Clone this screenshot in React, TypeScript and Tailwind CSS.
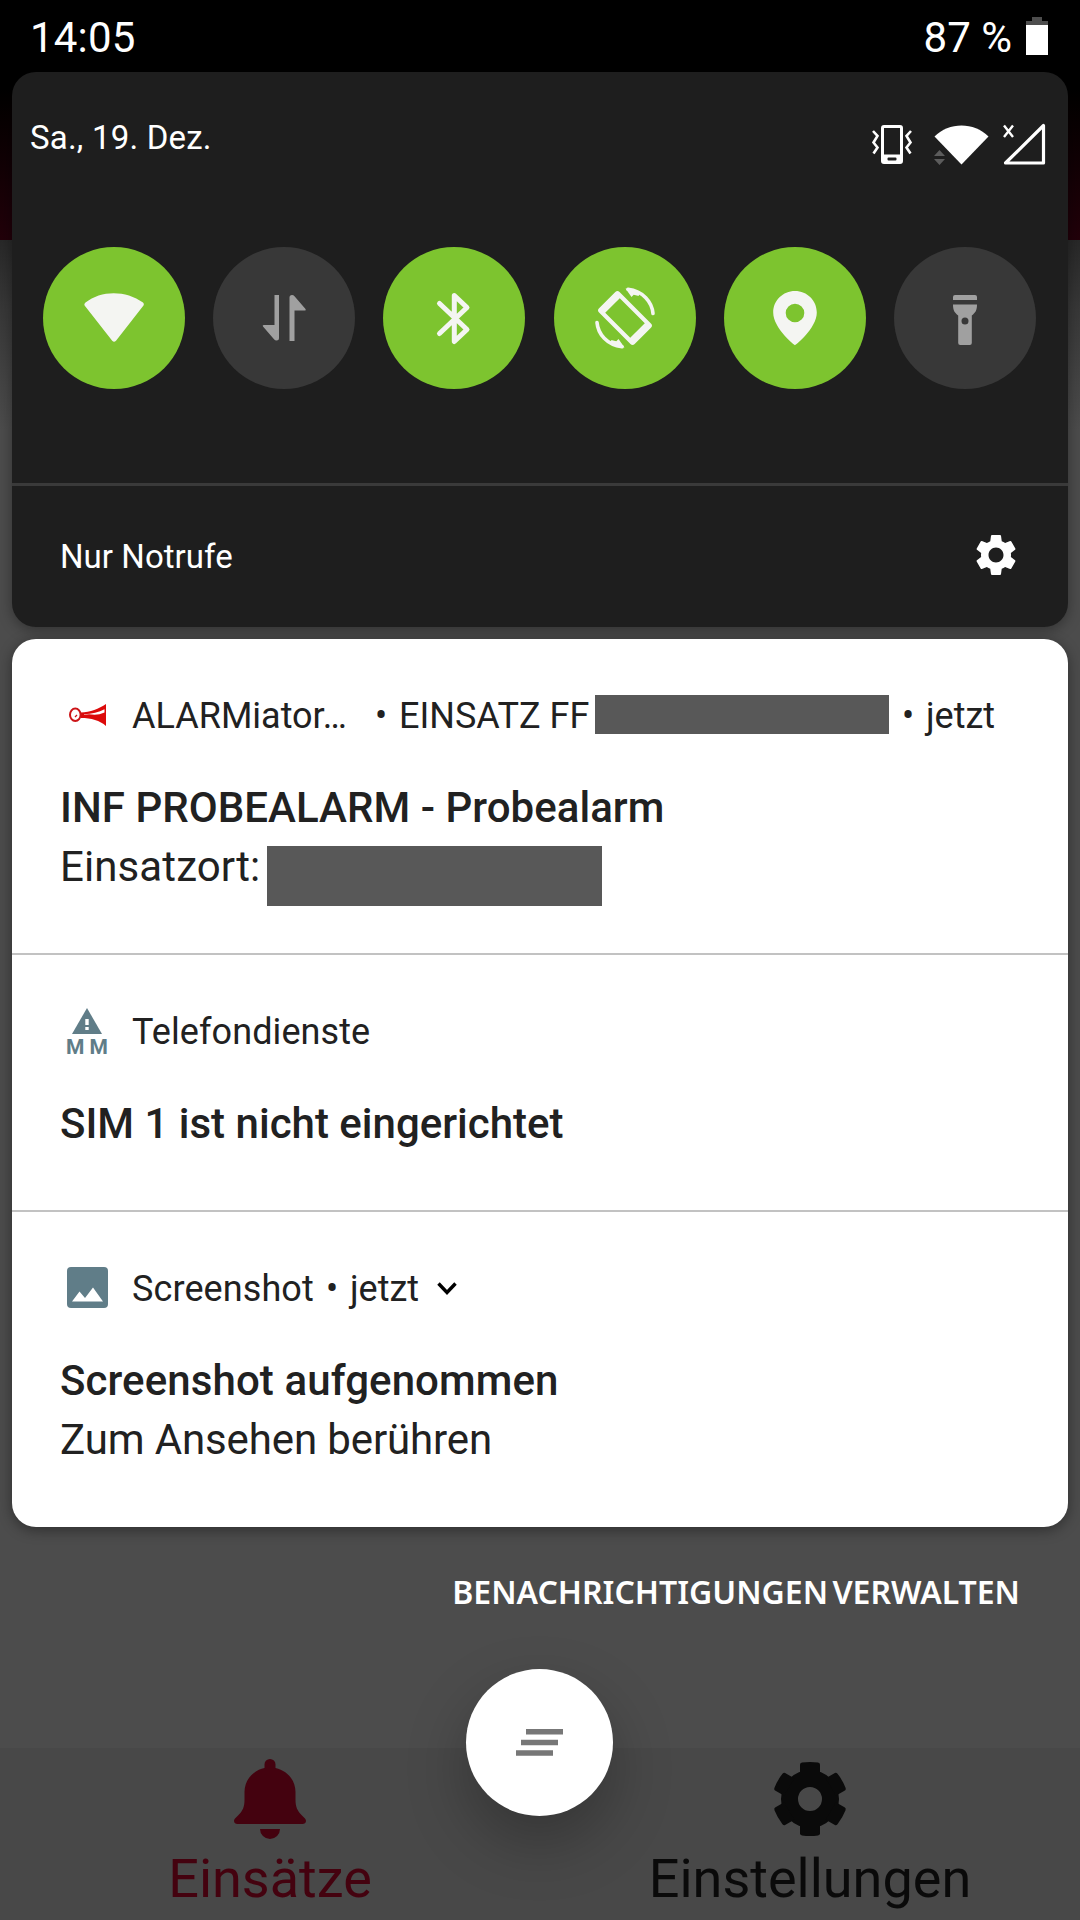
import React from "react";
import { MdSettings } from "react-icons/md";

function StatusBar() {
  return (
    <div className="flex h-[72px] shrink-0 items-start justify-between pl-[30px] pr-8 text-[42px] leading-[48px] text-white">
      <span className="mt-[14px] w-[110px] whitespace-nowrap tracking-[0.2px]">14:05</span>
      <div className="flex items-start">
        <span className="mt-[14px] whitespace-nowrap">87 %</span>
        <svg className="ml-[14px] mt-[17px]" width="22" height="38" viewBox="0 0 22 38">
          <path d="M6 0h10v4h6v5H0V4h6z" fill="#4d4d4d" />
          <path d="M0 8h22v30H0z" fill="#fff" />
        </svg>
      </div>
    </div>
  );
}

function PanelIcons() {
  return (
    <svg width="176" height="44" viewBox="871 123 176 44" fill="none">
      <path fillRule="evenodd" fill="#fff" d="M884 125h16a3 3 0 0 1 3 3v33a3 3 0 0 1-3 3h-16a3 3 0 0 1-3-3v-33a3 3 0 0 1 3-3zm0 3v26.500h16V128zm4.500 29.500a1 1 0 0 0-1 1v1a1 1 0 0 0 1 1h7a1 1 0 0 0 1-1v-1a1 1 0 0 0-1-1z" />
      <path d="M873 131l4.500 5-4 6.500 4 5-4 6M911 131l-4.500 5 4 6.500-4 5 4 6" stroke="#fff" strokeWidth="2.600" />
      <path d="M934.500 136.500C949 121.800 974 121.800 988.500 136.500L961.500 164.500z" fill="#fff" />
      <path d="M934 156l5.500-6 5.500 6zM934 159l5.500 6 5.500-6z" fill="#5c5c5c" />
      <path d="M1004 125.500l9 11.500M1013 125.500l-9 11.500" stroke="#fff" strokeWidth="2.400" />
      <path d="M1005.500 163L1043.500 125.500V163z" stroke="#fff" strokeWidth="3.200" strokeLinejoin="round" />
    </svg>
  );
}

const tiles: { name: string; on: boolean; icon: React.ReactNode }[] = [
  {
    name: "wifi",
    on: true,
    icon: <path transform="translate(0 10)" d="M42.500 45.500C58 33 83 33 100 45.500Q101.600 47 100.500 48.500L73 83.800Q71 85.700 69.200 83.800L41.600 48.500Q40.600 47 42.500 45.500Z" />,
  },
  {
    name: "mobile-data",
    on: false,
    icon: <path d="M61.500 48h4.500v43q0 2.500-2.500 2.500-1.500 0-2.500-1.200L50 79.500q-1-1.500 .8-1.500h10.700zM76.500 94v-43.500q0-2.500 2.500-2.500 1.500 0 2.500 1.200L92.500 62q1 1.500-.8 1.500H81.500V94z" />,
  },
  {
    name: "bluetooth",
    on: true,
    icon: <path d="M56.500 56.500L84 82.500 71.300 94.500V48.500L84 60.500 56.500 86.500" fill="none" stroke="#f4f5f2" strokeWidth="5" strokeLinecap="round" strokeLinejoin="round" />,
  },
  {
    name: "rotate",
    on: true,
    icon: (
      <g transform="translate(71 71)">
        <g transform="rotate(-45)">
          <path fillRule="evenodd" d="M-11.500-25.200h23a3 3 0 0 1 3 3v44.400a3 3 0 0 1-3 3h-23a3 3 0 0 1-3-3v-44.400a3 3 0 0 1 3-3zM-10.300-17.700v35.400h20.600v-35.400z" />
        </g>
        <path d="M3-28.700C18-27 27-16 28-4.500" fill="none" stroke="#f4f5f2" strokeWidth="3.600" strokeLinecap="round" />
        <path d="M.5-29.500l6 8.500 2.200-2.200 5 1.200 1-4.500z" />
        <path d="M-3 28.700C-18 27-27 16-28 4.500" fill="none" stroke="#f4f5f2" strokeWidth="3.600" strokeLinecap="round" />
        <path d="M-.5 29.500l-6-8.500-2.200 2.200-5-1.200-1 4.500z" />
      </g>
    ),
  },
  {
    name: "location",
    on: true,
    icon: <path fillRule="evenodd" d="M71 44C58.800 44 49.200 53.600 49.200 65.500 49.200 81.500 71 98.300 71 98.300S92.800 81.500 92.800 65.500C92.800 53.600 83.200 44 71 44zm0 12.700a9.300 9.300 0 1 1 0 18.600 9.300 9.300 0 0 1 0-18.600z" />,
  },
  {
    name: "torch",
    on: false,
    icon: <path fillRule="evenodd" d="M61 48h20q2 0 2 2v3H59v-3q0-2 2-2zM59 57.500h24c0 6-1.500 8-5.200 11v27.500q0 2-2 2H66.200q-2 0-2-2V68.500c-3.700-3-5.200-5-5.200-11zM71 70.500a3.500 3.500 0 1 0 0 7 3.500 3.500 0 0 0 0-7z" />,
  },
];

function QuickSettings() {
  return (
    <section className="mx-3 flex h-[555px] shrink-0 flex-col rounded-[24px] bg-[#1e1e1e] text-white shadow-[0_3px_14px_rgba(0,0,0,0.35)]">
      <div className="flex h-[175px] items-start justify-between pl-[18px] pr-[21px]">
        <span className="mt-[46px] whitespace-nowrap text-[33px] leading-[40px] tracking-[0.2px]">Sa., 19. Dez.</span>
        <div className="mt-[51px]">
          <PanelIcons />
        </div>
      </div>
      <div className="flex gap-[28.2px] px-[31px]">
        {tiles.map((t) => (
          <div key={t.name} className={t.on ? "size-[142px] shrink-0 rounded-full bg-[#7dc42f] text-[#f4f5f2]" : "size-[142px] shrink-0 rounded-full bg-[#383838] text-[#a0a0a0]"}>
            <svg width="142" height="142" viewBox="0 0 142 142" fill="currentColor">
              {t.icon}
            </svg>
          </div>
        ))}
      </div>
      <div className="mt-[94px] h-[3px] bg-[#3a3a3a]" />
      <div className="flex flex-1 items-center justify-between pl-12 pr-[47px]">
        <span className="whitespace-nowrap text-[33px] leading-[40px] tracking-[0.05px]">Nur Notrufe</span>
        <MdSettings className="mb-[3px] size-[50px]" />
      </div>
    </section>
  );
}

function HornIcon() {
  return (
    <svg width="40" height="26" viewBox="68 702 40 26">
      <path d="M81 712.500c9-.5 18-3.500 25-8.500v22c-6-5.500-15-8-25-8z" fill="#dc0a0a" />
      <path d="M84 714.200q12-.7 20.500-5v3.300q-5 2.300-10 2.300-5-.8-10.500-.1z" fill="#fff" />
      <ellipse cx="75.300" cy="714.700" rx="5.300" ry="6.200" fill="#fff" stroke="#cc1417" strokeWidth="2" />
      <path d="M75 717l2-2" stroke="#cc1417" strokeWidth="1.200" />
    </svg>
  );
}

function SimWarningIcon() {
  return (
    <div className="flex w-[42px] flex-col items-center text-[#607d88]">
      <svg width="30" height="26" viewBox="0 0 30 26">
        <path d="M15 0l15 26H0z" fill="currentColor" />
        <path d="M13.300 11h3.400v6h-3.400zM13.300 19h3.400v3h-3.400z" fill="#fff" />
      </svg>
      <span className="mt-[3px] whitespace-nowrap text-[21px] font-bold leading-[20px]">M M</span>
    </div>
  );
}

function PictureIcon() {
  return (
    <svg width="41" height="41" viewBox="0 0 41 41">
      <rect width="41" height="41" rx="4" fill="#607d88" />
      <path d="M5 34.500l7.500-10 5.500 6.500L26 20.500l10 14z" fill="#fff" />
    </svg>
  );
}

function Header({ icon, children }: { icon: React.ReactNode; children: React.ReactNode }) {
  return (
    <div className="flex h-10 items-center whitespace-nowrap text-[36px] leading-[40px]">
      <div className="flex h-10 w-[72px] shrink-0 items-center">{icon}</div>
      {children}
    </div>
  );
}

function Bullet() {
  return <span className="w-[14px] shrink-0 pt-px text-center">•</span>;
}

function Notifications() {
  return (
    <section className="mx-3 mt-3 h-[888px] shrink-0 rounded-[24px] bg-white text-[#212121] shadow-[0_3px_14px_rgba(0,0,0,0.4)]">
      <article className="h-[316px] border-b-2 border-[#c2c2c2] pl-12 pt-[56px]">
        <Header icon={<div className="ml-2"><HornIcon /></div>}>
          <span className="w-[242px] pt-[2px]">ALARMiator…</span>
          <Bullet />
          <span className="ml-[11px] w-[196px] pt-[2px]">EINSATZ FF</span>
          <span className="mb-px h-[39px] w-[294px] shrink-0 bg-[#585858]" />
          <span className="ml-3 flex"><Bullet /></span>
          <span className="ml-[11px] pt-[2px]">jetzt</span>
        </Header>
        <h2 className="mt-[44px] whitespace-nowrap text-[42px] font-medium leading-[58px] tracking-[0.04px]">INF PROBEALARM - Probealarm</h2>
        <div className="flex items-start">
          <p className="mt-px w-[207px] whitespace-nowrap text-[42px] leading-[58px] tracking-[0.1px]">Einsatzort:</p>
          <span className="mt-[9px] h-[60px] w-[335px] bg-[#585858]" />
        </div>
      </article>
      <article className="h-[257px] border-b-2 border-[#c2c2c2] pl-12 pt-[56px]">
        <Header icon={<div className="ml-[6px] mt-[2px]"><SimWarningIcon /></div>}>
          <span className="pt-[2px] tracking-[0.08px]">Telefondienste</span>
        </Header>
        <h2 className="mt-[44px] whitespace-nowrap text-[42px] font-medium leading-[58px]">SIM 1 ist nicht eingerichtet</h2>
      </article>
      <article className="pl-12 pt-[56px]">
        <Header icon={<div className="mb-[2px] ml-[6.5px]"><PictureIcon /></div>}>
          <span className="w-[193px] pt-[2px] tracking-[0.1px]">Screenshot</span>
          <Bullet />
          <span className="ml-[11px] w-[87px] pt-[2px]">jetzt</span>
          <svg width="20" height="13" viewBox="0 0 20 13" fill="none">
            <path d="M1.500 1.500L10 10.500 18.500 1.500" stroke="#000" strokeWidth="3.400" />
          </svg>
        </Header>
        <h2 className="mt-[44px] whitespace-nowrap text-[42px] font-medium leading-[58px] tracking-[0.1px]">Screenshot aufgenommen</h2>
        <p className="mt-px whitespace-nowrap text-[42px] leading-[58px] tracking-[-0.12px]">Zum Ansehen berühren</p>
      </article>
    </section>
  );
}

function BottomNav() {
  return (
    <nav className="grid h-[172px] shrink-0 grid-cols-2 bg-[#484848] text-[54px] leading-[60px]">
      <div className="flex flex-col items-center text-[#44020f]">
        <svg className="mt-[11px]" width="72" height="80" viewBox="0 0 72 80" fill="currentColor">
          <path d="M36 0a5.500 5.500 0 0 1 5.500 5.500V9C53 11.500 61.500 21 61.500 33v8c0 7 2 11 6 15l3 3c3 3 1 6-2 6H3.500c-3 0-5-3-2-6l3-3c4-4 6-8 6-15v-8C10.500 21 19 11.500 30.500 9V5.500A5.500 5.500 0 0 1 36 0zM26 70h20a10 10 0 0 1-20 0z" />
        </svg>
        <span className="mt-[10px]">Einsätze</span>
      </div>
      <div className="flex flex-col items-center text-[#0a0a0a]">
        <svg className="mt-[14px]" width="74" height="74" viewBox="-37 -37 74 74" fill="currentColor">
          <path fillRule="evenodd" d="M0-29a29 29 0 1 0 0 58 29 29 0 0 0 0-58zM0-12a12 12 0 1 1 0 24 12 12 0 0 1 0-24z" />
          {[0, 60, 120, 180, 240, 300].map((a) => (
            <path key={a} transform={`rotate(${a})`} d="M-10-24V-34.500Q-10-36-8-36.400 0-37.600 8-36.400 10-36 10-34.500V-24z" />
          ))}
        </svg>
        <span className="mt-[13px]">Einstellungen</span>
      </div>
    </nav>
  );
}

export default function App() {
  return (
    <div className="relative flex h-[1920px] w-[1080px] flex-col overflow-hidden bg-[linear-gradient(to_bottom,#000_0px,#000_84px,#0c0003_140px,#22000a_240px,#282828_240px,#383838_310px,#4c4c4c_430px,#4c4c4c_1920px)] font-['Roboto',sans-serif]">
      <StatusBar />
      <QuickSettings />
      <Notifications />
      <div className="flex flex-1 items-start justify-end pr-[60px]">
        <span className="mt-[43px] whitespace-nowrap font-['Noto_Sans',sans-serif] text-[32px] font-semibold leading-[44px] tracking-[0px] text-white [word-spacing:-4px]">
          BENACHRICHTIGUNGEN VERWALTEN
        </span>
      </div>
      <BottomNav />
      <button className="absolute left-[466px] top-[1669px] flex size-[147px] items-center justify-center rounded-full bg-white shadow-[0_26px_60px_rgba(0,0,0,0.26)]">
        <svg width="47" height="27" viewBox="0 0 47 27" fill="#777">
          <path d="M10 0h37v5.500H10zM5 10.700h37v5.500H5zM0 21.300h37v5.500H0z" />
        </svg>
      </button>
    </div>
  );
}
